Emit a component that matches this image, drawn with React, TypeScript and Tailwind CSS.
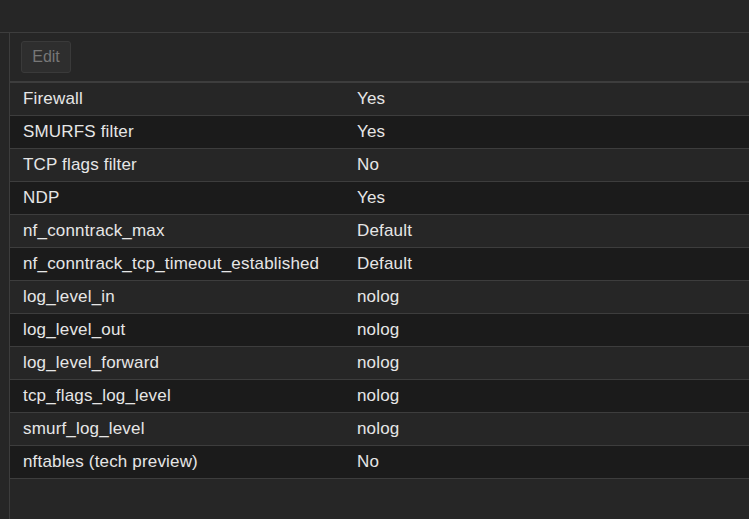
import React from 'react';

const rows: [string, string][] = [
  ['Firewall', 'Yes'],
  ['SMURFS filter', 'Yes'],
  ['TCP flags filter', 'No'],
  ['NDP', 'Yes'],
  ['nf_conntrack_max', 'Default'],
  ['nf_conntrack_tcp_timeout_established', 'Default'],
  ['log_level_in', 'nolog'],
  ['log_level_out', 'nolog'],
  ['log_level_forward', 'nolog'],
  ['tcp_flags_log_level', 'nolog'],
  ['smurf_log_level', 'nolog'],
  ['nftables (tech preview)', 'No'],
];

export default function App() {
  return (
    <div className="w-[749px] h-[519px] overflow-hidden bg-[#262626] text-[#e6e6e6] font-['Liberation_Sans',Arial,sans-serif] flex flex-col">
      <div className="h-[33px] shrink-0 border-b border-[#3d3d3d]" />
      <div className="flex flex-1">
        <div className="w-[10px] shrink-0 border-r border-[#3d3d3d]" />
        <div className="flex-1 flex flex-col">
          <div className="h-[49px] shrink-0 border-b border-[#3d3d3d] pt-[8px] pl-[11px]">
            <button className="w-[50px] h-[32px] rounded-[3px] bg-[#2e2e2e] border border-[#3a3a3a] text-[#777] text-[16px]">
              Edit
            </button>
          </div>
          <div className="border-b border-[#3d3d3d]">
            {rows.map(([k, v], i) => (
              <div
                key={k}
                className={`grid grid-cols-[334px_1fr] h-[33px] items-center border-t border-[#3d3d3d] text-[17px] tracking-[0.17px] ${
                  i % 2 === 1 ? 'bg-[#1b1b1b]' : 'bg-[#262626]'
                }`}
              >
                <div className="pl-[13px]">{k}</div>
                <div className="pl-[13px]">{v}</div>
              </div>
            ))}
          </div>
        </div>
      </div>
    </div>
  );
}
